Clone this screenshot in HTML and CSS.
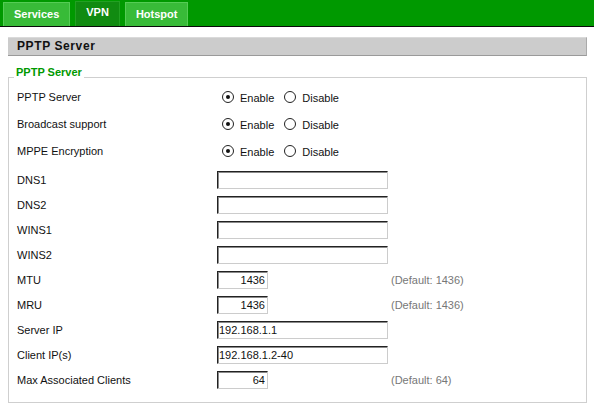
FILE: index.html
```html
<!DOCTYPE html>
<html>
<head>
<meta charset="utf-8">
<title>PPTP Server</title>
<link rel="stylesheet" href="styles.css">
</head>
<body>
<nav class="tabbar">
  <a class="tab">Services</a>
  <a class="tab active">VPN</a>
  <a class="tab">Hotspot</a>
</nav>
<main class="content">
  <div class="section-head">PPTP Server</div>
  <section class="panel">
    <div class="panel-title">PPTP Server</div>
    <div class="form">
      <div class="radio-group">
        <div class="row radio-row">
          <span class="label">PPTP Server</span>
          <span class="options"><span class="option"><span class="radio checked"></span>Enable</span><span class="option"><span class="radio"></span>Disable</span></span>
        </div>
        <div class="row radio-row">
          <span class="label">Broadcast support</span>
          <span class="options"><span class="option"><span class="radio checked"></span>Enable</span><span class="option"><span class="radio"></span>Disable</span></span>
        </div>
        <div class="row radio-row">
          <span class="label">MPPE Encryption</span>
          <span class="options"><span class="option"><span class="radio checked"></span>Enable</span><span class="option"><span class="radio"></span>Disable</span></span>
        </div>
      </div>
      <div class="row"><span class="label">DNS1</span><span><input class="field" type="text" value=""></span></div>
      <div class="row"><span class="label">DNS2</span><span><input class="field" type="text" value=""></span></div>
      <div class="row"><span class="label">WINS1</span><span><input class="field" type="text" value=""></span></div>
      <div class="row"><span class="label">WINS2</span><span><input class="field" type="text" value=""></span></div>
      <div class="row"><span class="label">MTU</span><span><input class="field num" type="text" value="1436"></span><span class="default">(Default: 1436)</span></div>
      <div class="row"><span class="label">MRU</span><span><input class="field num" type="text" value="1436"></span><span class="default">(Default: 1436)</span></div>
      <div class="row"><span class="label">Server IP</span><span><input class="field" type="text" value="192.168.1.1"></span></div>
      <div class="row"><span class="label">Client IP(s)</span><span><input class="field" type="text" value="192.168.1.2-40"></span></div>
      <div class="row"><span class="label">Max Associated Clients</span><span><input class="field num" type="text" value="64"></span><span class="default">(Default: 64)</span></div>
    </div>
  </section>
</main>
</body>
</html>
```
FILE: styles.css
```css
body {
  margin: 0;
  font-family: "Liberation Sans", Arial, sans-serif;
  font-size: 11px;
  color: #111;
  background: #fff;
}

.tabbar {
  display: flex;
  align-items: flex-end;
  gap: 5px;
  height: 26px;
  padding-left: 3px;
  background: #009900;
  border-bottom: 1px solid #0a0a0a;
}

.tab {
  box-sizing: border-box;
  height: 24px;
  padding: 0 10px;
  border: 1px solid #55cc55;
  border-bottom: 0;
  background: #38bb38;
  color: #fff;
  font-weight: bold;
  font-size: 11px;
  line-height: 22px;
}

.tab.active {
  height: 25px;
  line-height: 20px;
  background: #118b11;
  border-color: #22a022;
}

.content {
  padding: 10px 7px 0 8px;
}

.section-head {
  background: #cccccc;
  border-top: 1px solid #dadada;
  border-bottom: 1px solid #9a9a9a;
  border-right: 1px solid #aaaaaa;
  line-height: 17px;
  padding-left: 9px;
  font-weight: bold;
  font-size: 12px;
  letter-spacing: 0.6px;
  color: #111;
}

.panel {
  margin-top: 21px;
  border: 1px solid #cfcfcf;
  padding: 0 8px 10px;
}

.panel-title {
  width: fit-content;
  margin: -12px 0 0 -3px;
  padding: 0 2px;
  background: #fff;
  color: #009900;
  font-weight: bold;
  line-height: 13px;
}

.form {
  padding-top: 4px;
}

.radio-group {
  padding-bottom: 3px;
}

.row {
  display: grid;
  grid-template-columns: 200px 174px 1fr;
  align-items: center;
  height: 25px;
}

.row.radio-row {
  height: 27px;
}

.options {
  display: flex;
  align-items: center;
  grid-column: 2 / 4;
}

.option {
  display: flex;
  align-items: center;
  padding-top: 2px;
}

.option + .option {
  margin-left: 5px;
}

.radio {
  box-sizing: border-box;
  width: 12px;
  height: 12px;
  margin: -1px 6px 0 5px;
  border: 1px solid #222;
  border-radius: 50%;
  display: flex;
  align-items: center;
  justify-content: center;
  background: #fff;
}

.radio.checked::after {
  content: "";
  width: 4px;
  height: 4px;
  border-radius: 50%;
  background: #111;
}

.field {
  box-sizing: border-box;
  display: block;
  width: 171px;
  height: 18px;
  margin: 0;
  padding: 0 2px 0 1px;
  border: 1px solid;
  border-color: #222 #cccccc #cccccc #222;
  box-shadow: inset 1px 1px 0 #8a8a8a;
  font-family: "Liberation Sans", Arial, sans-serif;
  font-size: 11px;
  color: #111;
  background: #fff;
  outline: none;
}

.field.num {
  width: 51px;
  text-align: right;
}

.default {
  color: #777;
}
```
